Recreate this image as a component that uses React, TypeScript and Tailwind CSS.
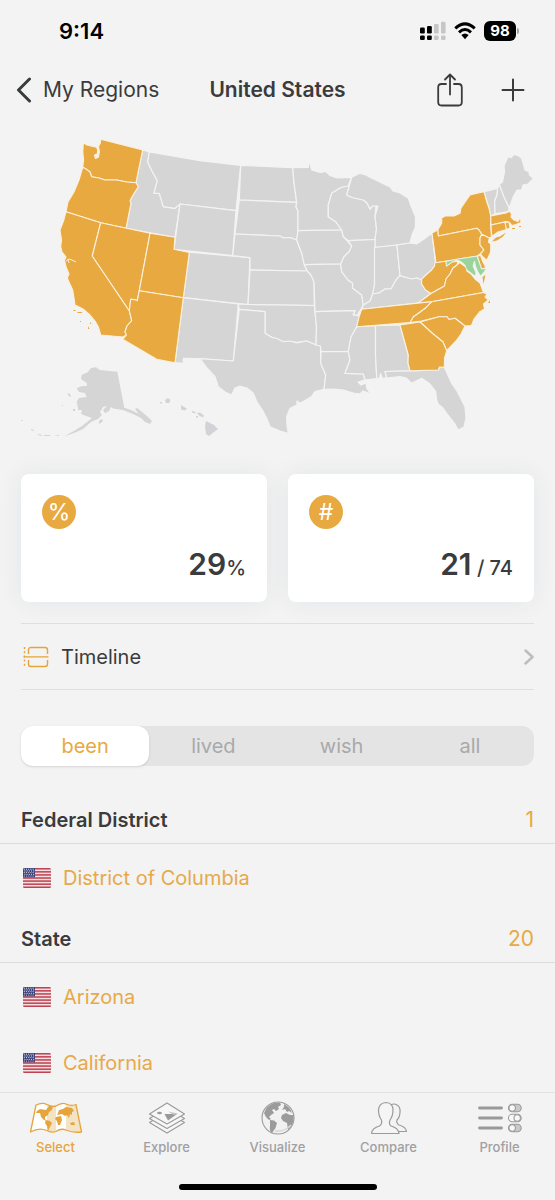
import React, { useState } from "react";

type Shape = { id: string; d: string };

const visited: Shape[] = [
  { id: "WA", d: "M83.3 142.7L87 145L93 146.5L96.7 147.3L97.8 150.5L97.2 154L94.5 155L95.5 158.5L98.5 157L99.3 152L98.6 146L100.2 143.5L100.7 139.3L142.7 150L138.5 170L136 182.7L127 182L116.7 180L105 180L99 178L91.7 176.7L90 172L86 169L82.7 167.3L83.6 160L82.8 152Z" },
  { id: "OR", d: "M82.7 167.3L86 169L90 172L91.7 176.7L99 178L105 180L116.7 180L127 182L136 182.7L138.3 186.7L133 195L130 200.7L131 203L126 228.3L100.7 222.7L66 211.7L68 202L74 192L79 180Z" },
  { id: "CA", d: "M66 211.7L100.7 222.7L92.3 256L129.3 310.7L131.7 320.7L127 326L125 331.7L126.5 335L122.7 337L100.7 335L98.3 326.7L95 321L90 315L83 309L75 305L74 298L72.7 290L69 282L67.3 278L69 274L66 266.7L64.5 260L66 257L62 252L60.7 246.7L61.5 240L60 230L63.5 221Z" },
  { id: "NV", d: "M100.7 222.7L150 233.3L139.3 290.7L137.3 300.7L134.5 299.6L130.7 299.3L129.3 310.7L92.3 256Z" },
  { id: "UT", d: "M150 233.3L175 237.3L174 249.3L189.3 252.5L183.3 297.7L139.3 290.7Z" },
  { id: "AZ", d: "M139.3 290.7L183.3 297.7L175 362.7L156.7 359.3L122.7 339.3L126.5 335L125 331.7L127 326L131.7 320.7L129.3 310.7L130.7 299.3L134.5 299.6L137.3 300.7Z" },
  { id: "NY", d: "M437.7 230L441.7 223.3L441.7 218L445 216L454 216L460 213.3L461 208L470 195L476 193.4L484 191.7L486.5 201L489 208.3L490.7 216L490.7 225L491.5 236.7L489.3 238L481.7 234.3L479 230L476.7 228.3L438.3 236Z" },
  { id: "PA", d: "M432 233L437.7 230L438.3 236L476.7 228.3L479 230L481.7 234.3L480 238L480 245L484 250L480 254L477.3 256L436 262.7Z" },
  { id: "NJ", d: "M481.7 234.3L489.3 238L488.5 242L490.7 244L490.7 252L486.7 260.5L483 257L480.5 254L484 250L480 245L480 238Z" },
  { id: "DE", d: "M477.3 256L480.5 255.4L483 262L486 267.7L481.5 269Z" },
  { id: "MA", d: "M490.7 216L506 213L509.3 211.2L511.5 213.5L511 217L514 220L518 221.5L519.5 219L517.5 217.5L520.5 218.5L521 222.5L516 224.5L512 225.5L509.5 222.5L506.5 221.6L491 225Z" },
  { id: "CT", d: "M491 225L505 222L506.5 229.5L498 232L492.7 236L491.5 234Z" },
  { id: "RI", d: "M505 222L509 222.5L510 228L506.5 229.5Z" },
  { id: "WV", d: "M435 262.7L446 261.2L446.5 266L452 262L458 261.2L457 265L453 268L450 274L446 279L444.5 286L439 289L431 293.5L425.5 290L421.7 284L421.7 279L427 274L431.7 270L434.5 266Z" },
  { id: "VA", d: "M418.3 302.9L425 298L431 293.5L439 289L444.5 286L446 279L450 274L453 268L457 265L459.5 262.5L466 267L467 271L471 274L475 279L480 283L483.5 292.5L431.7 301.7Z" },
  { id: "NC", d: "M410 322.5L413.3 316.7L420 312L425 308.3L431.7 301.7L483.5 292.5L487 294L485 297L488.5 300L483.5 304L484.5 309L479.5 312L474 319L471.5 325.5L465 326L455 318.3L449 319.5L447 316.7L439 316.7L421.7 321Z" },
  { id: "SC", d: "M420 322L439 316.7L447 316.7L449 319.5L455 318.3L465 326L461 334L456 341L446.7 350.7L443 342L432 333Z" },
  { id: "GA", d: "M400 325L420 322L432 333L443 342L446.7 350.7L444.5 358L444.3 367.3L439.5 367L438.3 370L410 370.9L408 363L408.3 355L405 343Z" },
  { id: "TN", d: "M361.7 309.3L431.7 301.7L425 308.3L420 312L413.3 316.7L410 322.5L356.7 326.7L359 317Z" },
];

const unvisited: Shape[] = [
  { id: "ID", d: "M142.7 150L149.3 152L147.7 161.7L152 171L157.3 180.7L154 193.3L159.3 193.3L163.3 206.7L175 208.3L180 204L175 237.3L126 228.3L131 203L130 200.7L133 195L138.3 186.7L136 182.7L138.5 170Z" },
  { id: "MT", d: "M149.3 152L200 160.7L240.7 165.3L236 210.7L180 204L175 208.3L163.3 206.7L159.3 193.3L154 193.3L157.3 180.7L152 171L147.7 161.7Z" },
  { id: "WY", d: "M180 204L236 210.7L232.7 255.7L174 249.3Z" },
  { id: "CO", d: "M189.3 252.2L250 257.7L248 304.7L183.3 297.7Z" },
  { id: "NM", d: "M183.3 297.7L238.3 304L233.3 361L196.7 358.5L183.3 358.3L183.3 363.3L175 362.7Z" },
  { id: "ND", d: "M240.7 165.3L292.7 167.7L294 183L296.7 202.3L239.3 200Z" },
  { id: "SD", d: "M239.3 200L296.7 202.3L296 207L298 211L298 231L296.7 240L290 237.5L283.3 238L280 236L235 234Z" },
  { id: "NE", d: "M235 234L280 236L283.3 238L290 237.5L296.7 240L301.7 253.3L304.5 265L307.3 271L250 270L250 257.7L232.7 255.7Z" },
  { id: "KS", d: "M250 270L307.3 271L311 275L314 281.7L314.3 305.5L248 304.5Z" },
  { id: "OK", d: "M238.3 304L248 304.5L314.3 305.5L315 311.7L316.5 327L316 345L306.7 341L296.7 342.3L290 341.5L283.3 341.7L271.7 337.3L265 333.3L265 311.7L239.3 309.3Z" },
  { id: "TX", d: "M239.3 309.3L265 311.7L265 333.3L271.7 337.3L277 338.5L283.3 341.7L290 341L296.7 342.8L306.7 341L316 345L320.5 346L320.7 363.3L325.7 375L324 389.3L315 391.7L311 397L300 403.3L297 401L297 405L290 408.3L286.7 416.7L287 426L288.3 433.3L280 431L270 426.7L267 419L263.3 411.7L257 402L253.3 393.3L247 388L240 386L235 388L231.7 395L225 392L218.3 386.7L215 376.7L207 368L200 358.7L233.3 361Z" },
  { id: "MN", d: "M292.7 167.7L308.3 167.3L308.5 163.3L310 163.3L311.7 170L320 172.5L326 171.5L330 175.5L337 178L351.7 177.3L348.3 186L341 187.5L331.7 193.3L328.3 205L328.3 216.7L336 222L341.7 230L298 230.7L298 211L296 207L296.7 202.3L294 183Z" },
  { id: "IA", d: "M298 230.7L341.7 230L343.3 236.7L351.7 246L349 252L344 256.7L340.7 264L304.3 264.7L301.7 253.3L296.7 240Z" },
  { id: "MO", d: "M304.3 264.7L340.7 264L341.7 271.7L348 280L352.7 283.3L352.5 288L361.7 295L363.3 305L361 309L357.3 315L353 315L355 310.7L315 311.7L314 281.7L311 275L307.3 271Z" },
  { id: "AR", d: "M315 311.7L355 310.7L353 315L359.5 316L356.7 326.7L351 337L348.3 351.7L321 351.7L320.5 346L316 345L316.5 327Z" },
  { id: "LA", d: "M321 351.7L348.3 351.7L350 360L345 373.3L363.3 374L365 380L358 382L361 385L366 383L367 389L371 394L363 391L360 394L353.3 393L343.3 390L334 389L324 389.3L325.7 375L320.7 363.3Z" },
  { id: "MS", d: "M356.7 326.7L375.5 325.7L375.5 355L376.8 378.5L365 380L363.3 374L345 373.3L350 360L348.3 351.7L351 337Z" },
  { id: "AL", d: "M375.5 325.7L400 325L405 343L408.3 355L408 363L410 370.9L385 371.5L386.7 377.5L382.5 378.5L380.5 373.5L379.5 378.5L376.8 378.5L375.5 355Z" },
  { id: "FL", d: "M385 371.5L410 370.9L438.3 370L439.5 367L444.3 367.3L451.7 383.3L457 391L465 406.7L466 418L464 427L458 430L455 424L446.7 413.3L443 408L438 404L436.7 400L435.5 391L430 384L421.7 378.3L416 381L411.7 383.3L406 378L400 376.7L386.7 378Z" },
  { id: "WI", d: "M351.7 177.3L346.7 195L352 197.5L363.3 200L367 203L370 209L372.5 206L376 205L375 216L376.5 229L375 239.5L348.3 240.7L343.3 236.7L341.7 230L336 222L328.3 216.7L328.3 205L331.7 193.3L341 187.5L348.3 186Z" },
  { id: "MI", d: "M351.7 177.3L360 173.3L366 175L370 177.3L390 187L393 191L400 193L408.3 198.3L411 206L415.5 216.7L415.5 227L412 235L410 243L397 245L375 247.5L375 239.5L376.5 229L375 216L378 206L372.5 206L370 209L367 203L363.3 200L352 197.5L346.7 195Z" },
  { id: "IL", d: "M348.3 240.7L375 239.5L374.5 285L372.7 294L370 301L363.3 305L361.7 295L352.5 288L352.7 283.3L348 280L341.7 271.7L340.7 264L344 256.7L349 252L351.7 246Z" },
  { id: "IN", d: "M374.5 247.5L397 245L400 275.7L396 280L391 289L385 289L379 293L372.7 294L374.5 285Z" },
  { id: "OH", d: "M397 245L410 243L416.7 244L424 239L432 233L435.5 262.7L434.5 266L431.7 270L427 274L421.7 280L417 278L411.7 279L406 277.5L400 275.7Z" },
  { id: "KY", d: "M363.3 305L370 301L372.7 294L379 293L385 289L391 289L396 280L400 275.7L406 277.5L411.7 279L417 278L421.7 280L421.7 284L425.5 290L431 293.5L425 298L418.3 302.9L361.7 309.3Z" },
  { id: "VT", d: "M484 191.7L497.7 188.3L497 195L494.7 201L495 213.8L490.7 216L489 208.3Z" },
  { id: "NH", d: "M497.7 188.3L499.3 184.3L504 197L509.3 208.3L508 211.5L495 213.8L494.7 201L497 195Z" },
  { id: "ME", d: "M499.3 184.3L502.5 182L504.5 172L504 166L508 156.5L511 157.5L514 154.5L518 155.5L521.7 158.3L525 170L529 172L529.5 175L533.5 178.5L528 184L523 185L521.7 190L517 190L513.3 196.7L509.3 207.7L504 197Z" },
];

const alaska =
  "M81.7 375L88 372L91 368L96 367.3L100 370L117.3 371.7L124.3 407.7L131 410L139 414L135 409L137 408L142 412L148 417L152 421L150 424L145 422L141 418L133 414L123 410L113 408.5L111 407L109 411L105 413.3L103 410L107 406L103 407L100 412L102 415L98 419L91 422L83 429L74 433L64 436.5L73 431.5L82 426L92 418L86 416L81 414L82 410L78.3 410L76.7 401.7L79 398L86.7 397L85 393L79 392L76.7 388.3L82 386L87 386L86.7 383L81 379Z";
const islands =
  "M67 393l3 1 1 3-2-1zM73 409h2v2h-2zM99 421l3-2 1 2-4 3zM62 405h1v1h-1zM21 420h1.5v1h-1.5zM31 429l3 1v1l-3-1zM38 434l4 1v1l-4-1zM44 435h6v1h-6zM54 436l5-1v1zM165 400l3-2 2.500 2-1.500 3-3 0zM160 402h2v1.500h-2zM181 405l3 2 3 1.500-2 2-4-1zM192 411l4 1-1 1.500-3-1zM197 413l3-.5 4 3-1 2-4-2zM196 416h2v1.500h-2zM206 421l8 4 4 4-4 3-5 4-3-2-1-8z";
const coastalIslands =
  "M73 310h2l1 1h-2zM77 312h5v1h-4zM80 321h1v1h-1zM90 322l1.500 2h-1.500zM88 326l1.500 3h-1.500zM512 228h3v1h-3zM519 226h2v1h-2zM492 241.500L496 237.500L500 236.500L506 232.500L503 236.500L497 240.500ZM482.500 277L485.500 275L483.500 284ZM488 303l2-3 0 3z";
const maryland =
  "M446 261.5L458 259L477 256.2L481.5 269L486.300 268.500L484 272L480.5 276L477.5 271L475.5 266L474.500 261L473 266L476 273L475 276L470.5 272.500L466.5 269.5L465 265L461 261.5L457 260L452 262L446.5 266Z";

function UsMap() {
  return (
    <svg viewBox="0 120 555 336" className="block w-full" role="img" aria-label="Map of visited states">
      <g fill="#d5d5d5" stroke="#f3f3f3" strokeWidth="1.2" strokeLinejoin="round">
        {unvisited.map((s) => (
          <path key={s.id} d={s.d} />
        ))}
      </g>
      <path d={alaska} fill="#d5d5d5" />
      <path d={islands} fill="#d2d3d6" />
      <g fill="#e8a940" stroke="#fbf1df" strokeWidth="1.1" strokeLinejoin="round">
        {visited.map((s) => (
          <path key={s.id} d={s.d} />
        ))}
      </g>
      <path d={coastalIslands} fill="#e8a940" />
      <path d="M66 261l3-2 3 1 4 2M68 259l1 4" fill="none" stroke="#fbf1df" strokeWidth="1" />
      <path d={maryland} fill="#9ad39b" stroke="#f0f6ea" strokeWidth="0.8" />
    </svg>
  );
}

function UsFlag() {
  return (
    <svg viewBox="0 0 28 20" className="h-5 w-7 shrink-0" aria-hidden="true">
      <clipPath id="flag-corners">
        <rect width="28" height="20" rx="1.5" />
      </clipPath>
      <g clipPath="url(#flag-corners)">
        <rect width="28" height="20" fill="#f3dfe2" />
        {[0, 1, 2, 3, 4, 5, 6].map((i) => (
          <rect key={i} y={i * 3.08} width="28" height="1.54" fill="#bf4453" />
        ))}
        <rect width="12" height="9.300" fill="#3a3f78" />
        {[0, 1, 2, 3, 4].map((r) =>
          [0, 1, 2, 3, 4].map((c) => (
            <circle key={r + "-" + c} cx={1.3 + c * 2.2 + (r % 2) * 0.6} cy={1.2 + r * 1.7} r="0.6" fill="#d9dbea" />
          ))
        )}
      </g>
    </svg>
  );
}

function SelectIcon() {
  return (
    <svg viewBox="0 0 54 32" className="h-8 w-[54px]" aria-hidden="true">
      <path d="M7 3Q13 0 18 3V28Q10 25 2 30Z" fill="#fff" />
      <path d="M18 3Q23 6 27 4V30Q22 31 18 28Z" fill="#f3e2c3" />
      <path d="M27 4Q33 0 37 2V27Q32 26 27 30Z" fill="#fff" />
      <path d="M37 2Q42 5 47 3L52 30Q44 31 37 27Z" fill="#f3e2c3" />
      <path
        d="M7 3Q13 0 18 2.500Q23 5 27 4Q33 0 37 2Q42 4.500 47 2.500L52.500 30Q44 31 37 28Q32 26 27 29.500Q22 31 18 28.500Q10 25 1.500 30Z"
        fill="none"
        stroke="#e6a53a"
        strokeWidth="1.3"
        strokeLinejoin="round"
      />
      <path
        d="M8 9l3-2 6 1 3-4 4 0-1 4-3 2-1 3-3 2 0 2 2 2-3-1-3-3-1-4-4 0zM17 18l4 1 2 2-2 4-2 4-1-5-2-3zM29 11l1-3 4-1 3-2 6 1 2 3-2 1 0 3-2-1-1 4-2-3-2 1-3-2-5 1zM27 15l5-1 1 4-2 5-2 0-1-4-2-2zM41 21l4-1 1 3-4 0z"
        fill="#e6a53a"
      />
    </svg>
  );
}

function ExploreIcon() {
  return (
    <svg viewBox="0 0 38 32" className="h-8 w-[38px]" fill="#f7f7f7" stroke="#9a9a9a" strokeWidth="1.1" strokeLinejoin="round" aria-hidden="true">
      <path d="M1.500 20.500L19 10L36.500 20.500L19 31Z" />
      <path d="M1.500 16.500L19 6L36.500 16.500L19 26.500Z" />
      <path d="M1.500 12L19 1L36.500 12L19 22Z" />
      <ellipse cx="11.500" cy="11" rx="2.400" ry="1.200" fill="#9a9a9a" stroke="none" />
      <path d="M16.500 12H29L20 18.500Z" fill="#999" stroke="none" />
      <path d="M20 9.500L30 11.500L26 13Z" fill="#c4c4c4" stroke="none" />
    </svg>
  );
}

function GlobeIcon() {
  return (
    <svg viewBox="0 0 34 34" className="h-[34px] w-[34px]" aria-hidden="true">
      <circle cx="17" cy="17" r="16" fill="#f1f1f1" stroke="#9b9b9b" strokeWidth="1.1" />
      <path
        d="M3 12Q6 4 13 2L19 1.500L20 4L17 6L18 8L15 10L13 8L11 9L13 12L10 14L8 16L10 18L8 19L5 16Z"
        fill="#9b9b9b"
      />
      <path d="M9 19L13 19.500L16 22L14.500 27L11 32Q8 30 9 25Z" fill="#9b9b9b" />
      <path d="M23 3Q29 6 31 12L28 10L26 11L24 8L21 9L23 6Z" fill="#9b9b9b" />
      <path d="M21 14L25 12L29 14L32.500 14Q33.500 20 30 26L27 29L26 22L22 20L20 17Z" fill="#9b9b9b" />
      <path d="M14 30Q24 31 30 24" fill="none" stroke="#d8d8d8" strokeWidth="1.500" />
    </svg>
  );
}

function CompareIcon() {
  return (
    <svg viewBox="0 0 38 34" className="h-[34px] w-[38px]" fill="none" stroke="#9b9b9b" strokeWidth="1.2" strokeLinejoin="round" aria-hidden="true">
      <path d="M21 4Q24 2 27 4Q30.500 6 30 11Q30 16 27 19Q26 22 29 24Q36 26 36.500 30.500H29" />
      <path
        d="M16 1.500Q23 2 23 9Q23 15 20 19Q18.500 23 21 25Q28.500 27 29 32.500H1.500Q2 27 9.500 25Q12.500 23 11.500 19Q8.500 15 8.500 9Q9 2 16 1.500Z"
        fill="#f5f5f5"
      />
    </svg>
  );
}

function ProfileIcon() {
  return (
    <svg viewBox="0 0 44 30" className="h-[30px] w-11" aria-hidden="true">
      <g stroke="#999" strokeWidth="2.800" strokeLinecap="round">
        <path d="M1.500 5h22M1.500 15h22M1.500 25h22" />
      </g>
      {[5, 15, 25].map((y, i) => (
        <g key={y} stroke="#9b9b9b" strokeWidth="1.1">
          <rect x="30.500" y={y - 3.7} width="12.700" height="7.400" rx="3.700" fill={i === 1 ? "#f8f8f8" : "#c9c9c9"} />
          <rect x={i === 1 ? 36 : 31} y={y - 3.2} width="6.400" height="6.400" rx="3.200" fill="#f8f8f8" />
        </g>
      ))}
    </svg>
  );
}

const filters = ["been", "lived", "wish", "all"];

const groups = [
  { title: "Federal District", count: 1, regions: ["District of Columbia"] },
  { title: "State", count: 20, regions: ["Arizona", "California"] },
];

const tabs = [
  { label: "Select", icon: <SelectIcon /> },
  { label: "Explore", icon: <ExploreIcon /> },
  { label: "Visualize", icon: <GlobeIcon /> },
  { label: "Compare", icon: <CompareIcon /> },
  { label: "Profile", icon: <ProfileIcon /> },
];

export default function App() {
  const [filter, setFilter] = useState("been");

  return (
    <div className="flex h-screen flex-col overflow-hidden bg-[#f3f3f3] font-['Inter','Liberation_Sans',sans-serif] text-[#3a3b3d]">
      <div className="flex h-[62px] shrink-0 items-center justify-between pr-9 pl-[59px] text-black">
        <span className="text-[22px] font-semibold">9:14</span>
        <span className="flex items-center gap-2">
          <svg viewBox="0 0 26 20" className="h-5 w-[26px]" aria-hidden="true">
            <g fill="#000">
              <rect x="0" y="6.500" width="4.800" height="6" rx="1.300" />
              <rect x="7" y="5" width="4.800" height="7.500" rx="1.300" />
              <rect x="0" y="14.500" width="4.800" height="4.600" rx="1.300" />
              <rect x="7" y="14.500" width="4.800" height="4.600" rx="1.300" />
            </g>
            <g fill="#c6c6c6">
              <rect x="14" y="3" width="4.600" height="9.500" rx="1.300" />
              <rect x="21" y="0.800" width="4.600" height="11.700" rx="1.300" />
              <rect x="14" y="14.500" width="4.600" height="4.600" rx="1.300" />
              <rect x="21" y="14.500" width="4.600" height="4.600" rx="1.300" />
            </g>
          </svg>
          <svg viewBox="0 0 22 18" className="h-[18px] w-[22px]" aria-hidden="true">
            <g fill="none" stroke="#000" strokeWidth="3">
              <path d="M1.300 6.300Q11-2.500 20.700 6.300" />
              <path d="M5 10.300Q11 4.800 17 10.300" />
            </g>
            <path d="M7.300 13Q11 9.800 14.700 13L11 17.300Z" fill="#000" />
          </svg>
          <span className="flex items-center gap-px">
            <span className="flex h-5 w-8 items-center justify-center rounded-md bg-black text-[15px] font-bold text-white">98</span>
            <span className="h-1.5 w-0.5 rounded-r-full bg-[#a5a5a5]" />
          </span>
        </span>
      </div>

      <header className="grid h-[58px] shrink-0 grid-cols-[1fr_auto_1fr] items-center px-4 pb-0.5">
        <button className="flex items-center gap-3 text-[21px]">
          <svg viewBox="0 0 15 26" className="h-[26px] w-[15px]" fill="none" stroke="currentColor" strokeWidth="3" strokeLinecap="round" strokeLinejoin="round" aria-hidden="true">
            <path d="M13.500 2L2.500 13L13.500 24" />
          </svg>
          My Regions
        </button>
        <h1 className="text-[21px] font-semibold">United States</h1>
        <div className="flex items-center justify-end gap-[38px] pr-3.5">
          <button aria-label="Share">
            <svg viewBox="0 0 26 34" className="h-[34px] w-[26px]" fill="none" stroke="currentColor" strokeWidth="1.800" strokeLinecap="round" strokeLinejoin="round" aria-hidden="true">
              <path d="M9 11H4.500Q1.200 11 1.200 14.500V29Q1.200 32.500 4.500 32.500H21.500Q24.800 32.500 24.800 29V14.500Q24.800 11 21.500 11H17" />
              <path d="M13 21.500V1.500M8 6.500L13 1.500L18 6.500" />
            </svg>
          </button>
          <button aria-label="Add">
            <svg viewBox="0 0 24 24" className="h-6 w-6" stroke="currentColor" strokeWidth="2" strokeLinecap="round" aria-hidden="true">
              <path d="M12 1.500V22.500M1.500 12H22.500" />
            </svg>
          </button>
        </div>
      </header>

      <main className="min-h-0 flex-1 overflow-x-hidden overflow-y-auto [scrollbar-width:none]">
        <UsMap />

        <section className="grid grid-cols-2 gap-[21px] px-[21px] pt-[18px] pb-[21px]">
          <article className="flex h-32 flex-col justify-between rounded-lg bg-white px-[21px] pt-[21px] pb-4 shadow-[0_0_24px_rgba(30,50,90,0.07)]">
            <span className="flex h-[34px] w-[34px] items-center justify-center rounded-full bg-[#e8a940] text-[23px] text-white">%</span>
            <p className="text-right text-xl leading-9 font-medium">
              <span className="text-[30px] font-semibold">29</span>%
            </p>
          </article>
          <article className="flex h-32 flex-col justify-between rounded-lg bg-white px-[21px] pt-[21px] pb-4 shadow-[0_0_24px_rgba(30,50,90,0.07)]">
            <span className="flex h-[34px] w-[34px] items-center justify-center rounded-full bg-[#e8a940] text-[23px] text-white">#</span>
            <p className="text-right text-xl leading-9 font-medium">
              <span className="text-[30px] font-semibold">21</span> / 74
            </p>
          </article>
        </section>

        <div className="px-[21px]">
          <button className="flex h-[67px] w-full items-center border-y border-[#dfdfe0] text-left text-xl">
            <svg viewBox="0 0 26 22" className="mr-3 ml-0.5 h-[22px] w-[26px]" fill="none" stroke="#e6a53a" strokeWidth="1.400" aria-hidden="true">
              <path d="M5.500 8V4Q5.500 1.500 8 1.500H22Q24.500 1.500 24.500 4V8M0.500 10.900H25.500M5.500 14V18Q5.500 20.500 8 20.500H22Q24.500 20.500 24.500 18V14" />
              <path d="M1.500 1v20" strokeDasharray="2 2.200" />
            </svg>
            <span className="flex-1">Timeline</span>
            <svg viewBox="0 0 10 16" className="h-4 w-2.5" fill="none" stroke="#bdbdbf" strokeWidth="2.500" strokeLinecap="round" strokeLinejoin="round" aria-hidden="true">
              <path d="M1.500 1.500L8.500 8L1.500 14.500" />
            </svg>
          </button>

          <div className="mt-9 grid h-10 grid-cols-4 rounded-xl bg-[#e4e4e4]" role="group" aria-label="Region filter">
            {filters.map((f) => (
              <button
                key={f}
                aria-pressed={f === filter}
                onClick={() => setFilter(f)}
                className={
                  f === filter
                    ? "rounded-xl bg-white text-xl text-[#e8a940] shadow-sm"
                    : "rounded-xl text-xl text-[#a9a9ab]"
                }
              >
                {f}
              </button>
            ))}
          </div>
        </div>

        <div className="pt-[25px]">
          {groups.map((g) => (
            <section key={g.title}>
              <div className="flex h-[53px] items-center justify-between border-b border-[#dcdcdd] px-[21px] pt-1.5 text-xl">
                <h2 className="font-semibold">{g.title}</h2>
                <span className="text-[21px] text-[#e8a940]">{g.count}</span>
              </div>
              <ul>
                {g.regions.map((r) => (
                  <li key={r}>
                    <button className="flex h-[66px] w-full items-center gap-3 px-[23px] pt-0.5 text-left text-xl text-[#e6a94a]">
                      <UsFlag />
                      {r}
                    </button>
                  </li>
                ))}
              </ul>
            </section>
          ))}
        </div>
      </main>

      <nav className="shrink-0 border-t border-[#e2e2e2] bg-[#f3f3f3]">
        <div className="grid h-[90px] grid-cols-5 pt-2">
          {tabs.map((t, i) => (
            <a
              key={t.label}
              href={"#" + t.label.toLowerCase()}
              className={
                i === 0
                  ? "flex flex-col items-center gap-[3px] text-[13px] font-medium text-[#e6a53a]"
                  : "flex flex-col items-center gap-[3px] text-[13px] font-medium text-[#a0a0a1]"
              }
            >
              <span className="flex h-[34px] items-center">{t.icon}</span>
              {t.label}
            </a>
          ))}
        </div>
        <div className="flex h-[17px] justify-center pt-px">
          <span className="h-1.5 w-[198px] rounded-full bg-black" />
        </div>
      </nav>
    </div>
  );
}
